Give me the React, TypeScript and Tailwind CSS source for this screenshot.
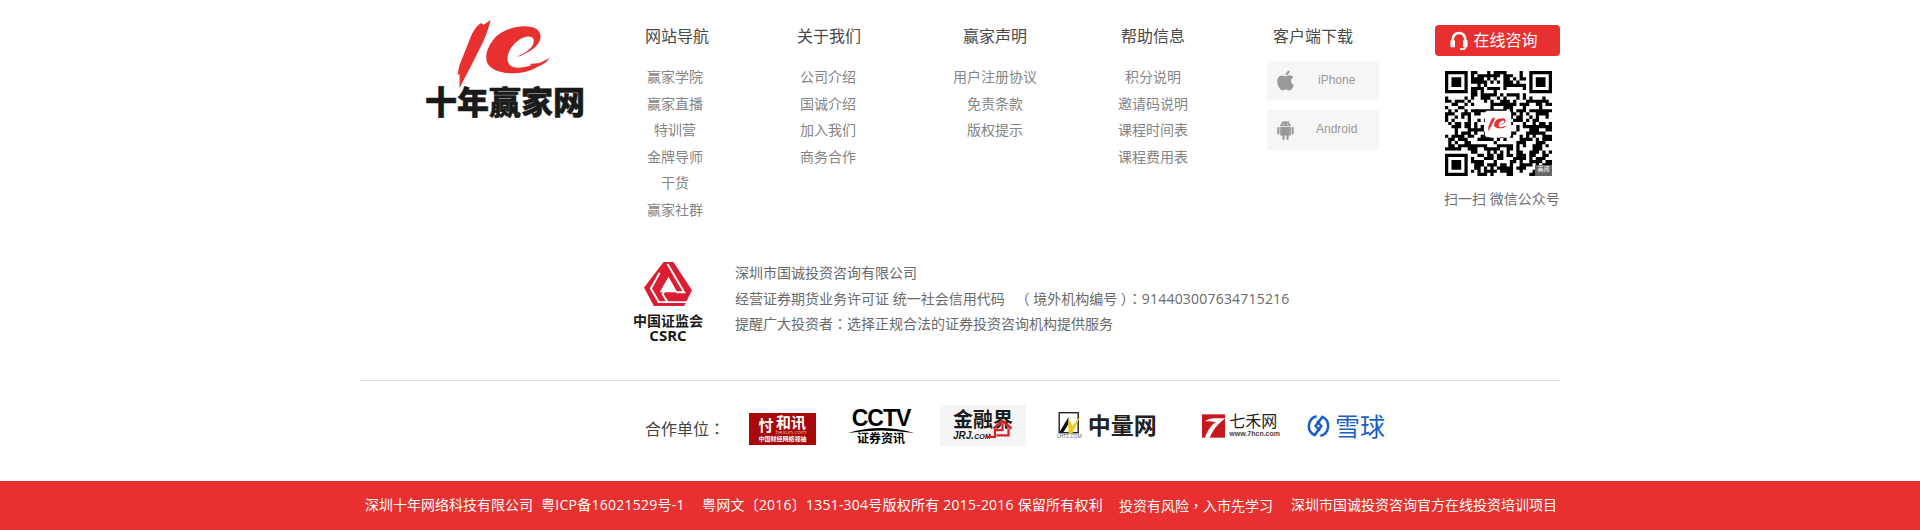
import { FaApple } from 'react-icons/fa';

const navColumns = [
  { title: '网站导航', width: 'w-[150px]', titleClass: 'pl-[4px]', listClass: '', items: ['赢家学院', '赢家直播', '特训营', '金牌导师', '干货', '赢家社群'] },
  { title: '关于我们', width: 'w-[158px]', titleClass: '', listClass: 'pr-[2px]', items: ['公司介绍', '国诚介绍', '加入我们', '商务合作'] },
  { title: '赢家声明', width: 'w-[174px]', titleClass: '', listClass: '', items: ['用户注册协议', '免责条款', '版权提示'] },
  { title: '帮助信息', width: 'w-[142px]', titleClass: '', listClass: '', items: ['积分说明', '邀请码说明', '课程时间表', '课程费用表'] },
];

const SwooshMark = ({ className }: { className: string }) => (
  <svg viewBox="10 5 94 68" className={className}>
    <path
      fill="#e83030"
      d="M43 5 C42 10 39 20 35 28 L23 52 L12 73 L12 59 L10 60 L12 50 L22 25 C24 19 28 11 34 8 L36 10 L40 7 Z"
    />
    <g transform="translate(2 0)">
      <path
        fill="#e83030"
        d="M67 42 C76 38 86 32 84 24 C82 20 74 21 68 26 C60 32 56 42 59 48 C62 54 72 54 82 50 L80 49 L90 48 L100 43 C96 50 88 51 84 54 C72 60 50 60 41 52 C33 46 37 32 46 22 C56 12 78 8 87 14 C95 20 90 30 82 35 C77 38 72 41 67 42 Z"
      />
    </g>
  </svg>
);

// full-width punctuation sits centred in the reference, the TC cut does that
const Punct = ({ children }: { children: string }) => (
  <span className="font-['Noto_Sans_CJK_TC',sans-serif]">{children}</span>
);

// modules of the code are not readable at this size, only the finder squares are exact
const qrSize = 33;
const inFinder = (x: number, y: number) =>
  (x < 8 && y < 8) || (x > qrSize - 9 && y < 8) || (x < 8 && y > qrSize - 9);

const qrModules = () => {
  const rects: string[] = [];
  let seed = 73;
  for (let y = 0; y < qrSize; y++) {
    for (let x = 0; x < qrSize; x++) {
      seed = (seed * 1103515245 + 12345) & 0x7fffffff;
      if (!inFinder(x, y) && (seed >> 16) % 100 < 50) rects.push(`M${x} ${y}h1v1h-1z`);
    }
  }
  return rects.join('');
};

const finderPath = (x: number, y: number) =>
  `M${x} ${y}h7v7h-7zM${x + 1} ${y + 1}v5h5v-5zM${x + 2} ${y + 2}h3v3h-3z`;

const QrCode = () => (
  <div className="relative h-[105px] w-[107px]">
    <svg viewBox="0 0 33 33" preserveAspectRatio="none" className="h-full w-full">
      <path fill="#000" d={qrModules()} />
      <path fill="#000" fillRule="evenodd" d={finderPath(0, 0) + finderPath(26, 0) + finderPath(0, 26)} />
    </svg>
    <div className="absolute left-[40px] top-[40px] flex h-[26px] w-[26px] items-center justify-center rounded-[3px] bg-white shadow-[0_0_2px_#bbb]">
      <SwooshMark className="w-[20px]" />
    </div>
    <div className="absolute bottom-0 right-0 flex h-[11px] w-[17px] justify-center bg-[#666] text-[6px] leading-[8px] text-white">美阅</div>
  </div>
);

const Logo = () => (
  <div className="ml-[65px] mr-[15px] mt-[20px] w-[160px]">
    <SwooshMark className="ml-[32px] h-[68px] w-[95px]" />
    <div className="mt-[-1px] whitespace-nowrap text-[32px] font-black leading-[30px] text-[#1a1a1a] [-webkit-text-stroke:0.5px_#1a1a1a]">十年赢家网</div>
  </div>
);

const NavColumn = ({ title, width, titleClass, listClass, items }: { title: string; width: string; titleClass: string; listClass: string; items: string[] }) => (
  <div className={`${width} pt-[24px] text-center`}>
    <h3 className={`${titleClass} text-base leading-6 text-[#4a4a4a]`}>{title}</h3>
    <ul className={`${listClass} mt-4 text-sm leading-[26.6px] text-[#858585]`}>
      {items.map((item) => (
        <li key={item}>{item}</li>
      ))}
    </ul>
  </div>
);

const DownloadColumn = () => (
  <div className="w-[178px] pt-[24px]">
    <h3 className="text-center text-base leading-6 text-[#4a4a4a]">客户端下载</h3>
    <div className="ml-[43px] mt-[13px] flex w-[112px] flex-col gap-[10px]">
      <div className="flex h-[39px] items-center bg-[#f6f6f6] pl-[10px] text-[#999]">
        <FaApple className="h-[23px] w-[17px]" />
        <span className="ml-[24px] pb-[2px] font-['Liberation_Sans',sans-serif] text-xs">iPhone</span>
      </div>
      <div className="flex h-[40px] items-center bg-[#f6f6f6] pl-[10px] text-[#999]">
        <svg viewBox="0 0 17 20" className="h-[20px] w-[17px]" fill="currentColor">
          <path d="M3.2 6.2 A5.3 5 0 0 1 13.8 6.2 Z" />
          <path d="M5 1 L6.4 3 M12 1 L10.6 3" stroke="currentColor" strokeWidth="0.8" />
          <path d="M3.2 7 H13.8 V15.5 H11.6 V18.8 A1.1 1.1 0 0 1 9.4 18.8 V15.5 H7.6 V18.8 A1.1 1.1 0 0 1 5.4 18.8 V15.5 H3.2 Z" />
          <rect x="0.3" y="7" width="2.2" height="7.5" rx="1.1" />
          <rect x="14.5" y="7" width="2.2" height="7.5" rx="1.1" />
          <circle cx="6.2" cy="4.4" r="0.6" fill="#f6f6f6" />
          <circle cx="10.8" cy="4.4" r="0.6" fill="#f6f6f6" />
        </svg>
        <span className="ml-[22px] pb-[2px] font-['Liberation_Sans',sans-serif] text-xs">Android</span>
      </div>
    </div>
  </div>
);

const WechatColumn = () => (
  <div className="ml-[33px] w-[125px] pt-[25px]">
    <div className="flex h-[31px] items-center justify-center gap-[5px] rounded bg-[#e83030] pr-[7px] text-base text-white">
      <svg viewBox="0 0 20 22" className="h-[20px] w-[18px]" fill="none" stroke="#fff" strokeWidth="2.8">
        <path d="M3 13 V9 a7 7 0 0 1 14 0 V13" />
        <rect x="0.5" y="10" width="5" height="8" rx="1" fill="#fff" stroke="none" />
        <rect x="14.5" y="10" width="5" height="8" rx="1" fill="#fff" stroke="none" />
        <path d="M17 16 v2 a2 2 0 0 1 -2 2 h-4" strokeWidth="1.8" />
      </svg>
      <span className="pb-[1px]">在线咨询</span>
    </div>
    <div className="ml-[10px] mt-[15px]">
      <QrCode />
    </div>
    <p className="ml-[9px] mt-[13px] whitespace-nowrap text-sm leading-5 text-[#707070]">扫一扫 微信公众号</p>
  </div>
);

const CsrcLogo = () => (
  <div className="w-[72px] pt-[2px] text-center text-[#1a1a1a]">
    <svg viewBox="0 0 50 46" className="mx-auto h-[45px] w-[49px]">
      <path fill="#dc1c30" d="M20 0 H30 L49 29 L41 45 H10 L0 26 Z" />
      <path fill="#fff" d="M25 15 L34 31 H16 Z" />
      <path fill="none" stroke="#fff" strokeWidth="2" d="M24 2 L41 31 H33 M16 11 L7 27 L15 41 H44 M25 22 L19 33 L24 41" />
    </svg>
    <div className="mt-[6px] whitespace-nowrap text-sm font-bold leading-[15px]">中国证监会</div>
    <div className="whitespace-nowrap font-['Open_Sans',sans-serif] text-[15px] font-bold leading-[14px]">CSRC</div>
  </div>
);

const HexunLogo = () => (
  <div className="flex h-[32px] w-[67px] flex-col items-center bg-[#a80808] text-white">
    <div className="flex items-center gap-[2px] pt-[3px]">
      <span className="text-[15px] font-bold leading-[15px]">忖</span>
      <div className="flex flex-col items-center">
        <span className="text-[15px] font-bold leading-[13px]">和讯</span>
        <span className="text-[6px] leading-[6px] text-[#e8b0b0]">hexun.com</span>
      </div>
    </div>
    <span className="mt-[1px] whitespace-nowrap text-[6px] font-bold leading-[7px]">中国财经网络领袖</span>
  </div>
);

const CctvLogo = () => (
  <div className="mb-[4px] flex w-[66px] flex-col items-center text-black">
    <span className="font-['Liberation_Sans',sans-serif] text-[23px] font-bold leading-[17px] tracking-[-1px]">CCTV</span>
    <svg viewBox="0 0 66 6" className="h-[6px] w-[66px]">
      <path d="M0 6 Q33 -4 66 6 Q33 1 0 6 Z" fill="#000" />
    </svg>
    <span className="whitespace-nowrap text-[12px] font-bold leading-[11px]">证券资讯</span>
  </div>
);

const JrjLogo = () => (
  <div className="relative mb-[6px] h-[41px] w-[86px] bg-[#f5f5f5] pl-[13px] pt-[4px] text-[#1a1a1a]">
    <div className="whitespace-nowrap text-[20px] font-bold leading-[22px]">金融界</div>
    <div className="whitespace-nowrap font-['Liberation_Sans',sans-serif] text-[10px] font-bold italic leading-[10px]">
      JRJ.<span className="text-[7px]">COM</span>
    </div>
    <svg viewBox="0 0 40 26" className="absolute left-[46px] top-[12px] h-[23px] w-[30px]" fill="none" stroke="#d2232a" strokeWidth="3">
      <path d="M0 24 H12 V15 H22 V6" />
      <path d="M10 13 L22 3 L34 13" strokeWidth="3.5" />
      <path d="M30 13 V22 H14" />
    </svg>
  </div>
);

const ZhongliangLogo = () => (
  <div className="mb-[6px] flex w-[97px] items-center gap-[6px]">
    <div className="flex flex-col items-center">
      <svg viewBox="0 0 22 22" className="h-[22px] w-[23px]">
        <rect x="0.7" y="0.7" width="19" height="20" fill="#fff" stroke="#222" strokeWidth="1.4" />
        <path d="M1 20 L10 5 V12 L5 20 Z" fill="#111" />
        <path d="M10 6 L14 14 L22 4 L14 21 H10 Z" fill="#f2cc0c" />
      </svg>
      <span className="whitespace-nowrap text-[5px] leading-[5px] text-[#555]">LHTZ.COM</span>
    </div>
    <span className="whitespace-nowrap text-[23px] font-bold leading-[27px] text-[#222]">中量网</span>
  </div>
);

const QiheLogo = () => (
  <div className="mb-[6px] flex w-[78px] items-center gap-[4px]">
    <svg viewBox="0 0 24 24" className="h-[24px] w-[25px]">
      <rect width="24" height="24" fill="#c8181e" />
      <path d="M3 7 C8 3 16 4 24 4 C17 9 11 16 8 24 H3 C6 16 10 11 14 8 C10 7 6 7 3 7 Z" fill="#fff" />
    </svg>
    <div className="flex flex-col">
      <span className="whitespace-nowrap text-base leading-[17px] text-[#222]">七禾网</span>
      <span className="whitespace-nowrap font-['Liberation_Sans',sans-serif] text-[7px] font-bold leading-[8px] text-[#444]">www.7hcn.com</span>
    </div>
  </div>
);

const XueqiuLogo = () => (
  <div className="mb-[6px] flex w-[78px] items-center gap-[5px] text-[#1a5fc8]">
    <svg viewBox="0 0 24 24" className="h-[24px] w-[24px]" fill="none" stroke="currentColor" strokeWidth="2.6">
      <path d="M10 1.8 A10.5 10.5 0 0 0 8 21.5 L15 12 L10.5 7" />
      <path d="M14 22.2 A10.5 10.5 0 0 0 16 2.5 L9 12 L13.5 17" />
    </svg>
    <span className="whitespace-nowrap text-[25px] leading-[28px]">雪球</span>
  </div>
);

const App = () => (
  <div className="flex h-[530px] flex-col overflow-hidden bg-white font-['Open_Sans','Noto_Sans_CJK_SC',sans-serif]">
    <div className="mx-auto w-[1200px] flex-1">
      <div className="flex h-[260px]">
        <Logo />
        {navColumns.map((col) => (
          <NavColumn key={col.title} {...col} />
        ))}
        <DownloadColumn />
        <WechatColumn />
      </div>

      <div className="flex h-[121px] border-b border-[#e2e2e2] pl-[272px]">
        <CsrcLogo />
        <div className="ml-[31px] whitespace-pre text-sm leading-[25.6px] text-[#6a6a6a]">
          <p>深圳市国诚投资咨询有限公司</p>
          <p>
            {'经营证券期货业务许可证 统一社会信用代码   （ 境外机构编号 ）'}
            <Punct>：</Punct>
            <span className="tracking-[0.2px]">914403007634715216</span>
          </p>
          <p>
            提醒广大投资者<Punct>：</Punct>选择正规合法的证券投资咨询机构提供服务
          </p>
        </div>
      </div>

      <div className="flex h-[95px] items-center pl-[285px]">
        <span className="w-[104px] whitespace-nowrap text-base text-[#444]">
          合作单位<Punct>：</Punct>
        </span>
        <HexunLogo />
        <div className="ml-[32px]">
          <CctvLogo />
        </div>
        <div className="ml-[26px]">
          <JrjLogo />
        </div>
        <div className="ml-[31px]">
          <ZhongliangLogo />
        </div>
        <div className="ml-[48px]">
          <QiheLogo />
        </div>
        <div className="ml-[27px]">
          <XueqiuLogo />
        </div>
      </div>
    </div>

    <div className="h-[49px] bg-[#e83030]">
      <div className="mx-auto flex h-full w-[1200px] items-center whitespace-nowrap pb-[1px] pl-[5px] text-sm text-white">
        <span className="w-[176px]">深圳十年网络科技有限公司</span>
        <span className="w-[161px] tracking-[0.25px]">粤ICP备16021529号-1</span>
        <span className="w-[417px] tracking-[0.22px]">粤网文〔2016〕1351-304号版权所有 2015-2016 保留所有权利</span>
        <span className="w-[172px]">
          投资有风险<Punct>，</Punct>入市先学习
        </span>
        <span>深圳市国诚投资咨询官方在线投资培训项目</span>
      </div>
    </div>
  </div>
);

export default App;
